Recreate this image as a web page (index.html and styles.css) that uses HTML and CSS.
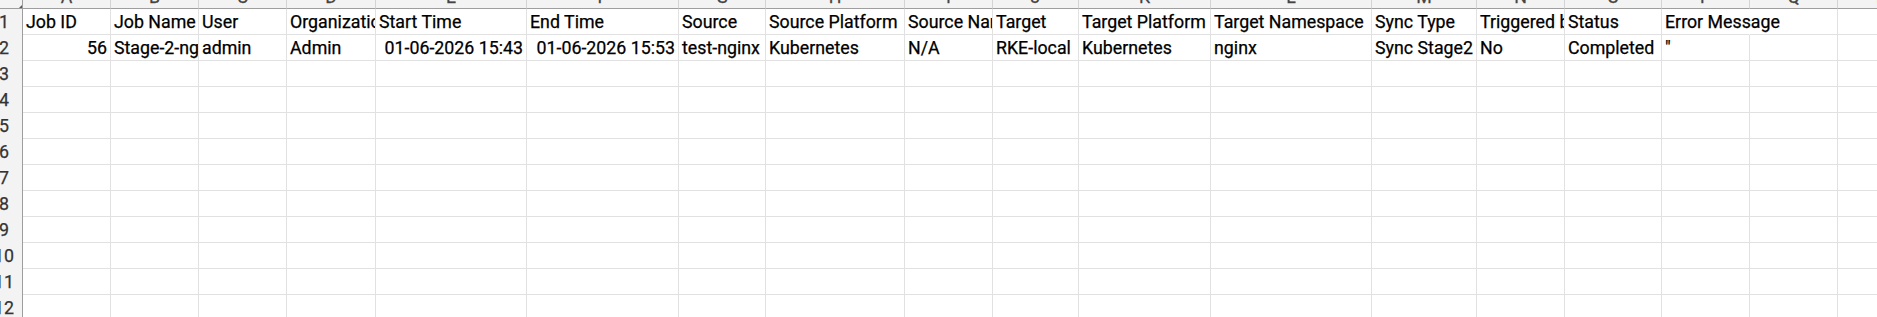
FILE: index.html
```html
<!DOCTYPE html>
<html lang="en">
<head>
<meta charset="utf-8">
<title>Sync Jobs</title>
<link rel="stylesheet" href="styles.css">
</head>
<body>
<div class="sheet">
  <div class="corner"></div>
  <div class="ch"><span>A</span></div><div class="ch"><span>B</span></div><div class="ch"><span>C</span></div><div class="ch"><span>D</span></div><div class="ch"><span>E</span></div><div class="ch"><span>F</span></div><div class="ch"><span>G</span></div><div class="ch"><span>H</span></div><div class="ch"><span>I</span></div><div class="ch"><span>J</span></div><div class="ch"><span>K</span></div><div class="ch"><span>L</span></div><div class="ch"><span>M</span></div><div class="ch"><span>N</span></div><div class="ch"><span>O</span></div><div class="ch"><span>P</span></div><div class="ch"><span>Q</span></div><div class="ch"><span>R</span></div>

  <div class="rh"><span>1</span></div>
  <div class="c">Job ID</div><div class="c">Job Name</div><div class="c">User</div><div class="c">Organization</div><div class="c">Start Time</div><div class="c">End Time</div><div class="c">Source</div><div class="c">Source Platform</div><div class="c">Source Namespace</div><div class="c">Target</div><div class="c">Target Platform</div><div class="c">Target Namespace</div><div class="c">Sync Type</div><div class="c">Triggered by</div><div class="c">Status</div><div class="c ov">Error Message</div><div class="c"></div><div class="c"></div>

  <div class="rh"><span>2</span></div>
  <div class="c num">56</div><div class="c">Stage-2-nginx</div><div class="c">admin</div><div class="c">Admin</div><div class="c num">01-06-2026 15:43</div><div class="c num">01-06-2026 15:53</div><div class="c">test-nginx</div><div class="c">Kubernetes</div><div class="c">N/A</div><div class="c">RKE-local</div><div class="c">Kubernetes</div><div class="c">nginx</div><div class="c">Sync Stage2</div><div class="c">No</div><div class="c">Completed</div><div class="c">"</div><div class="c"></div><div class="c"></div>

  <div class="rh"><span>3</span></div>
  <div class="c"></div><div class="c"></div><div class="c"></div><div class="c"></div><div class="c"></div><div class="c"></div><div class="c"></div><div class="c"></div><div class="c"></div><div class="c"></div><div class="c"></div><div class="c"></div><div class="c"></div><div class="c"></div><div class="c"></div><div class="c"></div><div class="c"></div><div class="c"></div>

  <div class="rh"><span>4</span></div>
  <div class="c"></div><div class="c"></div><div class="c"></div><div class="c"></div><div class="c"></div><div class="c"></div><div class="c"></div><div class="c"></div><div class="c"></div><div class="c"></div><div class="c"></div><div class="c"></div><div class="c"></div><div class="c"></div><div class="c"></div><div class="c"></div><div class="c"></div><div class="c"></div>

  <div class="rh"><span>5</span></div>
  <div class="c"></div><div class="c"></div><div class="c"></div><div class="c"></div><div class="c"></div><div class="c"></div><div class="c"></div><div class="c"></div><div class="c"></div><div class="c"></div><div class="c"></div><div class="c"></div><div class="c"></div><div class="c"></div><div class="c"></div><div class="c"></div><div class="c"></div><div class="c"></div>

  <div class="rh"><span>6</span></div>
  <div class="c"></div><div class="c"></div><div class="c"></div><div class="c"></div><div class="c"></div><div class="c"></div><div class="c"></div><div class="c"></div><div class="c"></div><div class="c"></div><div class="c"></div><div class="c"></div><div class="c"></div><div class="c"></div><div class="c"></div><div class="c"></div><div class="c"></div><div class="c"></div>

  <div class="rh"><span>7</span></div>
  <div class="c"></div><div class="c"></div><div class="c"></div><div class="c"></div><div class="c"></div><div class="c"></div><div class="c"></div><div class="c"></div><div class="c"></div><div class="c"></div><div class="c"></div><div class="c"></div><div class="c"></div><div class="c"></div><div class="c"></div><div class="c"></div><div class="c"></div><div class="c"></div>

  <div class="rh"><span>8</span></div>
  <div class="c"></div><div class="c"></div><div class="c"></div><div class="c"></div><div class="c"></div><div class="c"></div><div class="c"></div><div class="c"></div><div class="c"></div><div class="c"></div><div class="c"></div><div class="c"></div><div class="c"></div><div class="c"></div><div class="c"></div><div class="c"></div><div class="c"></div><div class="c"></div>

  <div class="rh"><span>9</span></div>
  <div class="c"></div><div class="c"></div><div class="c"></div><div class="c"></div><div class="c"></div><div class="c"></div><div class="c"></div><div class="c"></div><div class="c"></div><div class="c"></div><div class="c"></div><div class="c"></div><div class="c"></div><div class="c"></div><div class="c"></div><div class="c"></div><div class="c"></div><div class="c"></div>

  <div class="rh"><span>10</span></div>
  <div class="c"></div><div class="c"></div><div class="c"></div><div class="c"></div><div class="c"></div><div class="c"></div><div class="c"></div><div class="c"></div><div class="c"></div><div class="c"></div><div class="c"></div><div class="c"></div><div class="c"></div><div class="c"></div><div class="c"></div><div class="c"></div><div class="c"></div><div class="c"></div>

  <div class="rh"><span>11</span></div>
  <div class="c"></div><div class="c"></div><div class="c"></div><div class="c"></div><div class="c"></div><div class="c"></div><div class="c"></div><div class="c"></div><div class="c"></div><div class="c"></div><div class="c"></div><div class="c"></div><div class="c"></div><div class="c"></div><div class="c"></div><div class="c"></div><div class="c"></div><div class="c"></div>

  <div class="rh"><span>12</span></div>
  <div class="c"></div><div class="c"></div><div class="c"></div><div class="c"></div><div class="c"></div><div class="c"></div><div class="c"></div><div class="c"></div><div class="c"></div><div class="c"></div><div class="c"></div><div class="c"></div><div class="c"></div><div class="c"></div><div class="c"></div><div class="c"></div><div class="c"></div><div class="c"></div>
</div>
</body>
</html>
```

FILE: styles.css
```css
html, body {
  margin: 0;
  padding: 0;
  background: #ffffff;
  overflow: hidden;
}

.sheet {
  display: grid;
  grid-template-columns: 23px 88px 88px 88px 89px 151px 152px 87px 139px 88px 86px 132px 161px 105px 88px 97px 88px 88px 88px;
  grid-template-rows: 9px repeat(12, 26px);
  font-family: Roboto, "Liberation Sans", sans-serif;
  font-size: 17.8px;
  color: #000000;
  -webkit-text-stroke: 0.25px currentColor;
  width: max-content;
}

.corner {
  position: relative;
  box-sizing: border-box;
  background: #f3f3f3;
  border-right: 1px solid #9e9e9e;
  border-bottom: 1px solid #9e9e9e;
}

.corner::after {
  content: "";
  position: absolute;
  right: 0;
  bottom: 0;
  width: 0;
  height: 0;
  border-left: 3px solid transparent;
  border-bottom: 3px solid #5a5a5a;
}

.ch {
  box-sizing: border-box;
  background: #f3f3f3;
  border-right: 1px solid #d4d4d4;
  border-bottom: 1px solid #9e9e9e;
  overflow: hidden;
  text-align: center;
  color: #444444;
}

.ch span {
  display: block;
  line-height: 22px;
  margin-top: -14px;
}

.rh {
  box-sizing: border-box;
  background: #f3f3f3;
  border-right: 1px solid #9e9e9e;
  overflow: hidden;
  color: #333333;
}

.rh span {
  display: block;
  width: 38px;
  margin-left: -15px;
  text-align: center;
  line-height: 22px;
  padding-top: 2px;
}

.c {
  box-sizing: border-box;
  border-right: 1px solid #e1e1e1;
  border-bottom: 1px solid #e1e1e1;
  padding: 2px 3px 0 3px;
  line-height: 22px;
  white-space: nowrap;
  overflow: hidden;
}

.num {
  text-align: right;
}

.ov {
  overflow: visible;
  border-right-color: transparent;
}
```
